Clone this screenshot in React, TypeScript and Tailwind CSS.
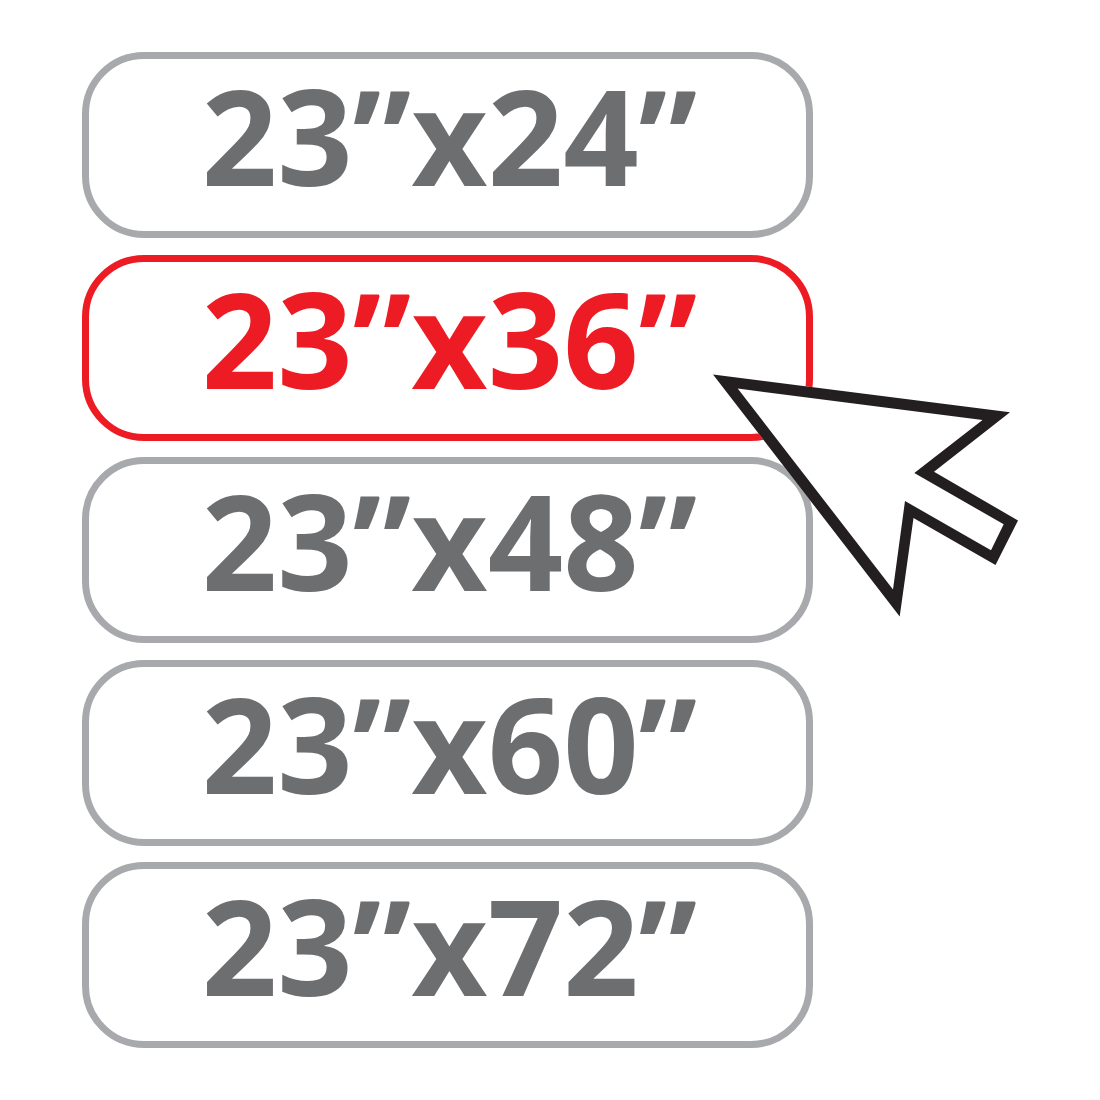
import React, { useState } from "react";
import clsx from "clsx";

const SIZES = ["23”x24”", "23”x36”", "23”x48”", "23”x60”", "23”x72”"];

function Cursor() {
  return (
    <svg
      viewBox="0 0 305 243"
      aria-hidden="true"
      className="pointer-events-none absolute top-[119px] -right-[205px] z-10 h-[243px] w-[305px]"
    >
      <path
        fill="#fff"
        d="M0 .5 297 38.3 221 97.7 305 146.5 282.5 191 200.5 144 186.7 242.5Z"
      />
      <path
        fill="#231f20"
        fillRule="evenodd"
        d="M0 .5 297 38.3 221 97.7 305 146.5 282.5 191 200.5 144 186.7 242.5Z
           M24.7 14.5 269.5 46 201.3 99 290.7 150.3 278 176.3 192 127 180 215.5Z"
      />
    </svg>
  );
}

export default function App() {
  const [selected, setSelected] = useState("23”x36”");

  return (
    <main className="min-h-screen bg-white flex">
      <ul className="flex-1 flex flex-col justify-between gap-4 pt-[52px] pb-[52px] pl-[82px] pr-[287px]">
        {SIZES.map((size) => {
          const active = size === selected;
          return (
            <li key={size} className="relative">
              <button
                type="button"
                aria-pressed={active}
                onClick={() => setSelected(size)}
                className={clsx(
                  "block w-full h-[186px] pb-5 pl-1 rounded-[62px] border-[7px] bg-white text-center whitespace-nowrap font-['Open_Sans','Noto_Sans',sans-serif] font-bold text-[132px] leading-none",
                  active
                    ? "border-[#ed1c24] text-[#ed1c24]"
                    : "border-[#a7a9ac] text-[#6d6e70]"
                )}
              >
                {size}
              </button>
              {active && <Cursor />}
            </li>
          );
        })}
      </ul>
    </main>
  );
}
